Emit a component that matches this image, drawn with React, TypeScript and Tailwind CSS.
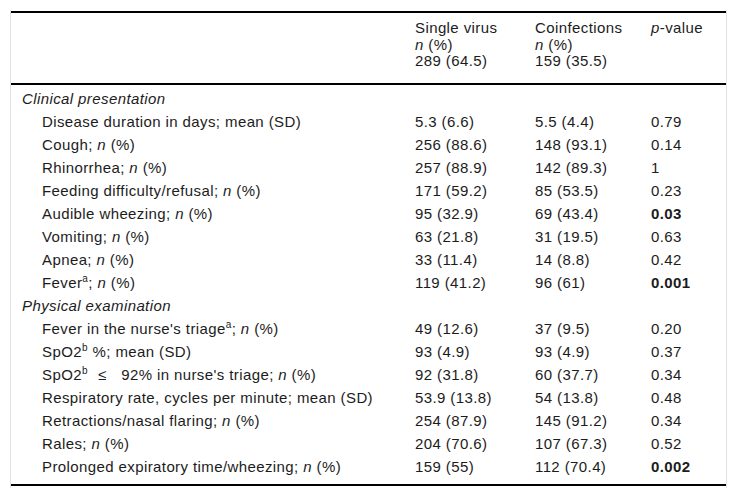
import React from "react";

type Row =
  | { kind: "section"; label: React.ReactNode }
  | { kind: "item"; label: React.ReactNode; a: string; b: string; p: string; bold?: boolean };

const N = () => <i>n</i>;
const Sup = ({ c }: { c: string }) => <sup className="text-[10px] top-[-0.6em]">{c}</sup>;

const rows: Row[] = [
  { kind: "section", label: "Clinical presentation" },
  { kind: "item", label: <>Disease duration in days; mean (SD)</>, a: "5.3 (6.6)", b: "5.5 (4.4)", p: "0.79" },
  { kind: "item", label: <>Cough; <N /> (%)</>, a: "256 (88.6)", b: "148 (93.1)", p: "0.14" },
  { kind: "item", label: <>Rhinorrhea; <N /> (%)</>, a: "257 (88.9)", b: "142 (89.3)", p: "1" },
  { kind: "item", label: <>Feeding difficulty/refusal; <N /> (%)</>, a: "171 (59.2)", b: "85 (53.5)", p: "0.23" },
  { kind: "item", label: <>Audible wheezing; <N /> (%)</>, a: "95 (32.9)", b: "69 (43.4)", p: "0.03", bold: true },
  { kind: "item", label: <>Vomiting; <N /> (%)</>, a: "63 (21.8)", b: "31 (19.5)", p: "0.63" },
  { kind: "item", label: <>Apnea; <N /> (%)</>, a: "33 (11.4)", b: "14 (8.8)", p: "0.42" },
  { kind: "item", label: <>Fever<Sup c="a" />; <N /> (%)</>, a: "119 (41.2)", b: "96 (61)", p: "0.001", bold: true },
  { kind: "section", label: "Physical examination" },
  { kind: "item", label: <>Fever in the nurse's triage<Sup c="a" />; <N /> (%)</>, a: "49 (12.6)", b: "37 (9.5)", p: "0.20" },
  { kind: "item", label: <>SpO2<Sup c="b" /> %; mean (SD)</>, a: "93 (4.9)", b: "93 (4.9)", p: "0.37" },
  { kind: "item", label: <>SpO2<Sup c="b" /><span className="mx-[10px]">≤</span> 92% in nurse's triage; <N /> (%)</>, a: "92 (31.8)", b: "60 (37.7)", p: "0.34" },
  { kind: "item", label: <>Respiratory rate, cycles per minute; mean (SD)</>, a: "53.9 (13.8)", b: "54 (13.8)", p: "0.48" },
  { kind: "item", label: <>Retractions/nasal flaring; <N /> (%)</>, a: "254 (87.9)", b: "145 (91.2)", p: "0.34" },
  { kind: "item", label: <>Rales; <N /> (%)</>, a: "204 (70.6)", b: "107 (67.3)", p: "0.52" },
  { kind: "item", label: <>Prolonged expiratory time/wheezing; <N /> (%)</>, a: "159 (55)", b: "112 (70.4)", p: "0.002", bold: true },
];

export default function App() {
  return (
    <div
      className="w-[736px] h-[497px] bg-white text-[#1c1c1c] pt-[10px] pl-[10px]"
      style={{ fontFamily: '"Liberation Sans", Arial, sans-serif' }}
    >
      <div className="w-[717px] h-[478px] border-x border-[#e2e2e2] text-[15px] tracking-[0.4px]">
        <div className="pt-[1px]">
          <div className="border-t-2 border-black" />
          <div className="grid grid-cols-[404px_120px_116px_1fr] leading-[16.5px] pt-[7px] pb-[13px]">
            <div />
            <div className="flex flex-col">
              <span>Single virus</span>
              <span><N /> (%)</span>
              <span>289 (64.5)</span>
            </div>
            <div className="flex flex-col">
              <span>Coinfections</span>
              <span><N /> (%)</span>
              <span>159 (35.5)</span>
            </div>
            <div>
              <i>p</i>-value
            </div>
          </div>
          <div className="border-t-2 border-black" />
          <div className="pt-[3px] pb-[5px]">
            {rows.map((r, i) =>
              r.kind === "section" ? (
                <div key={i} className="h-[23px] flex items-center pl-[11px] italic">
                  {r.label}
                </div>
              ) : (
                <div key={i} className="h-[23px] grid grid-cols-[404px_120px_116px_1fr] items-center">
                  <div className="pl-[31px] whitespace-nowrap">{r.label}</div>
                  <div>{r.a}</div>
                  <div>{r.b}</div>
                  <div className={r.bold ? "font-bold" : ""}>{r.p}</div>
                </div>
              )
            )}
          </div>
          <div className="border-t-2 border-black" />
        </div>
      </div>
    </div>
  );
}
